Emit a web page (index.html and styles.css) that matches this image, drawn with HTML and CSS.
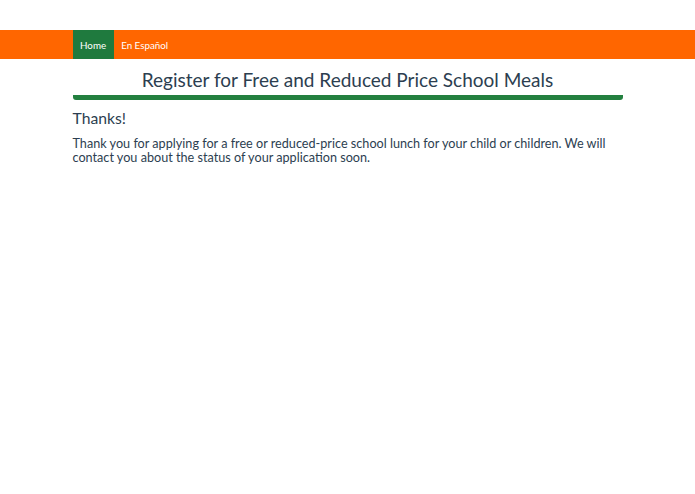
FILE: index.html
```html
<!DOCTYPE html>
<html lang="en">
<head>
<meta charset="utf-8">
<title>Register for Free and Reduced Price School Meals</title>
<link rel="stylesheet" href="styles.css">
</head>
<body>
<nav class="topbar">
  <div class="container nav-inner">
    <a class="nav-link active" href="#">Home</a>
    <a class="nav-link" href="#">En Español</a>
  </div>
</nav>
<main class="container">
  <h1 class="title">Register for Free and Reduced Price School Meals</h1>
  <h2 class="subtitle">Thanks!</h2>
  <p class="text">Thank you for applying for a free or reduced-price school lunch for your child or children. We will contact you about the status of your application soon.</p>
</main>
</body>
</html>
```
FILE: styles.css
```css
* { box-sizing: border-box; }
html, body { margin: 0; padding: 0; background: #fff; }
body {
  font-family: Lato, "Liberation Sans", sans-serif;
  color: #2c3e50;
  padding-top: 30px;
}
.container {
  width: 550px;
  margin: 0 auto;
}
.topbar {
  background: #ff6600;
  height: 29px;
}
.nav-inner {
  display: flex;
  height: 100%;
}
.nav-link {
  display: flex;
  align-items: center;
  padding: 0 7.5px;
  font-size: 9.8px;
  color: #fff;
  text-decoration: none;
}
.nav-link.active {
  background: #1f7a3e;
}
.title {
  margin: 0;
  padding-top: 10px;
  padding-bottom: 4px;
  font-size: 19px;
  font-weight: 400;
  text-align: center;
  line-height: 22px;
  border-bottom: 5px solid #23803f;
  border-radius: 3px;
}
.subtitle {
  margin: 8px 0 0;
  font-size: 15.7px;
  font-weight: 400;
  line-height: 20px;
}
.text {
  margin: 9px 0 0;
  font-size: 12.65px;
  line-height: 14px;
}
```
